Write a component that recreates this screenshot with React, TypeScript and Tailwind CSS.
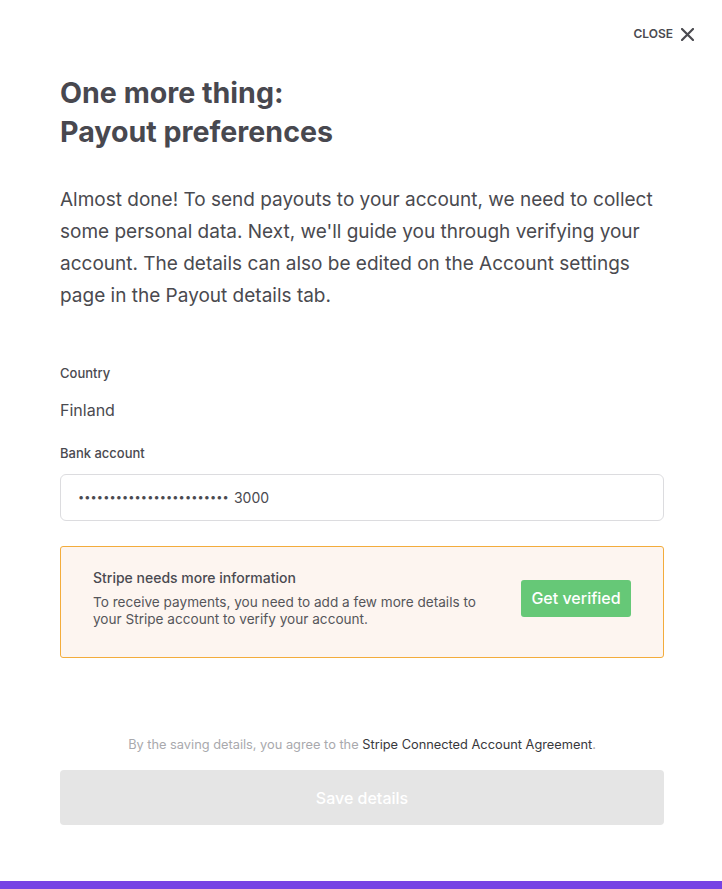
export default function App() {
  return (
    <div
      className="h-[889px] w-full bg-white flex flex-col text-[#48484f]"
      style={{ fontFamily: 'Inter, "Noto Sans", sans-serif' }}
    >
      <main className="flex-1 flex flex-col pl-[60px] pr-[58px] pt-[26px]">
        {/* close */}
        <div className="flex justify-end -mr-[30px]">
          <button className="flex items-center gap-[8px] text-[12px] leading-[16px] font-semibold text-[#4a4a50]">
            CLOSE
            <svg width="13" height="13" viewBox="0 0 13 13" fill="none">
              <path d="M1 1L12 12M12 1L1 12" stroke="#4a4a50" strokeWidth="2.2" strokeLinecap="round" />
            </svg>
          </button>
        </div>

        <h1 className="mt-[31px] text-[28.6px] leading-[39px] font-bold text-[#48484f]">
          One more thing:
          <br />
          Payout preferences
        </h1>

        <p className="mt-[33px] text-[19px] leading-[32px] text-[#4a4a4f]">
          Almost done! To send payouts to your account, we need to collect some personal data. Next,
          we'll guide you through verifying your account. The details can also be edited on the
          Account settings page in the Payout details tab.
        </p>

        <div className="mt-[51px] text-[13px] leading-[20px] font-medium text-[#4a4a50]">Country</div>
        <div className="mt-[15px] text-[16px] leading-[24px] text-[#4a4a50]">Finland</div>

        <div className="mt-[21px] text-[13px] leading-[20px] font-medium text-[#4a4a50]">Bank account</div>
        <div className="mt-[11px] h-[47px] rounded-[6px] border border-[#dcdcdf] flex items-center px-[17px] text-[14px] text-[#4a4a50]">
          <span className="text-[11px] tracking-[0.1px]">••••••••••••••••••••••••</span>
          <span className="ml-[5px]">3000</span>
        </div>

        {/* stripe notice */}
        <div className="mt-[25px] rounded-[3px] border border-[#f3ac3c] bg-[#fdf5f0] flex items-center justify-between pl-[32px] pr-[32px] pt-[21px] pb-[29px]">
          <div>
            <div className="text-[14px] leading-[20px] font-medium text-[#4a4a50]">
              Stripe needs more information
            </div>
            <div className="mt-[6px] text-[13.6px] leading-[17px] text-[#55555a] w-[395px]">
              To receive payments, you need to add a few more details to your Stripe account to verify
              your account.
            </div>
          </div>
          <button className="h-[37px] w-[110px] rounded-[3px] bg-[#66c877] text-white text-[16px] font-medium">
            Get verified
          </button>
        </div>

        <div className="mt-[77px] text-center text-[12.8px] leading-[20px] text-[#a9a9ad]">
          By the saving details, you agree to the{' '}
          <span className="text-[#38383c]">Stripe Connected Account Agreement</span>.
        </div>

        <button className="mt-[15px] h-[55px] w-full rounded-[4px] bg-[#e5e5e5] text-white text-[16px] font-medium">
          Save details
        </button>
      </main>
      <div className="h-[8px] bg-[#7643e4]" />
    </div>
  );
}
